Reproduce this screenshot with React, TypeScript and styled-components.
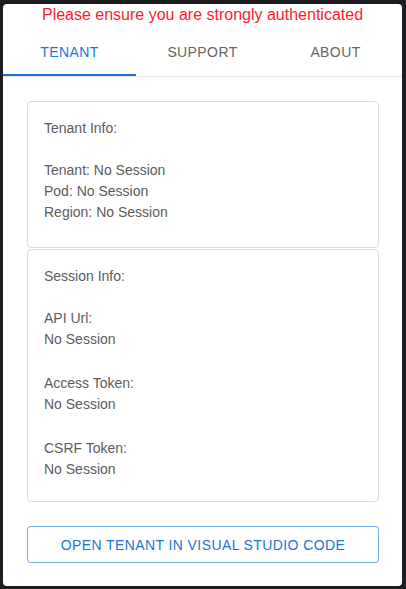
import React, { useState } from 'react'
import styled, { createGlobalStyle } from 'styled-components'

const GlobalStyle = createGlobalStyle`
  html, body {
    margin: 0;
    padding: 0;
    background: #1e1e22;
  }
  body {
    font-family: "Liberation Sans", Arial, Helvetica, sans-serif;
  }
`

const Popup = styled.div`
  box-sizing: border-box;
  width: 399px;
  height: 582px;
  margin: 4px 0 0 3px;
  background: #fff;
  border-radius: 4px;
  display: flex;
  flex-direction: column;
  overflow: hidden;
`

const Banner = styled.div`
  height: 24px;
  line-height: 22px;
  text-align: center;
  font-size: 16px;
  color: #ff1a2d;
`

const TabBar = styled.div`
  display: flex;
  border-bottom: 1px solid #e3e3e3;
`

const Tab = styled.button<{ $active?: boolean }>`
  flex: 1;
  height: 48px;
  border: none;
  background: none;
  padding: 0;
  font-family: inherit;
  font-size: 14px;
  letter-spacing: 0.4px;
  text-transform: uppercase;
  color: ${(p) => (p.$active ? '#1976d2' : '#666')};
  box-shadow: ${(p) => (p.$active ? 'inset 0 -2px 0 #1976d2' : 'none')};
  cursor: pointer;
`

const Content = styled.div`
  padding: 24px 23px 0 24px;
  display: flex;
  flex-direction: column;
`

const Card = styled.div<{ $bottom?: number }>`
  border: 1px solid #dcdcdc;
  border-radius: 4px;
  padding: 16px 16px ${(p) => p.$bottom ?? 24}px;
  color: #5c5c5c;
  font-size: 14px;
  line-height: 21px;
  & + & {
    margin-top: 1px;
  }
`

const CardTitle = styled.div`
  margin-bottom: 21px;
`

const Group = styled.div`
  line-height: 20.5px;
  & + & {
    margin-top: 24px;
  }
`

const OpenButton = styled.button`
  margin-top: 24px;
  height: 37px;
  border: 1px solid rgba(25, 118, 210, 0.6);
  border-radius: 4px;
  background: #fff;
  color: #1976d2;
  font-family: inherit;
  font-size: 14px;
  letter-spacing: 0.4px;
  text-transform: uppercase;
  cursor: pointer;
`

const tabs = ['Tenant', 'Support', 'About']

export default function App() {
  const [tab, setTab] = useState(0)
  return (
    <>
      <GlobalStyle />
      <Popup>
        <Banner>Please ensure you are strongly authenticated</Banner>
        <TabBar>
          {tabs.map((t, i) => (
            <Tab key={t} $active={tab === i} onClick={() => setTab(i)}>
              {t}
            </Tab>
          ))}
        </TabBar>
        <Content>
          <Card>
            <CardTitle>Tenant Info:</CardTitle>
            <div>Tenant: No Session</div>
            <div>Pod: No Session</div>
            <div>Region: No Session</div>
          </Card>
          <Card $bottom={22}>
            <CardTitle>Session Info:</CardTitle>
            <Group>
              <div>API Url:</div>
              <div>No Session</div>
            </Group>
            <Group>
              <div>Access Token:</div>
              <div>No Session</div>
            </Group>
            <Group>
              <div>CSRF Token:</div>
              <div>No Session</div>
            </Group>
          </Card>
          <OpenButton>Open Tenant in Visual Studio Code</OpenButton>
        </Content>
      </Popup>
    </>
  )
}
